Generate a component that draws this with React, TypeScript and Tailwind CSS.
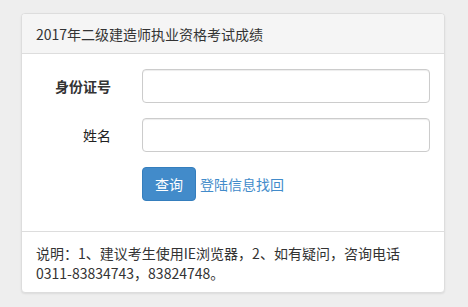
export default function App() {
  return (
    <div
      className="min-h-[307px] w-full bg-[#eeeeee] pt-[13px] text-[14px] text-[#333333]"
      style={{ fontFamily: '"Noto Sans CJK SC", "Noto Sans", sans-serif' }}
    >
      <div className="mx-[21px] w-[424px] overflow-hidden rounded-[4px] border border-[#dddddd] bg-white shadow-[0_1px_2px_rgba(0,0,0,0.08)]">
        {/* Header */}
        <div className="flex h-[40px] items-center border-b border-[#dddddd] bg-[#f5f5f5] pl-[14px] leading-none">
          2017年二级建造师执业资格考试成绩
        </div>

        {/* Form */}
        <div className="flex flex-col gap-[15px] pt-[15px] pb-[30px]">
          <div className="flex items-center">
            <label className="w-[89px] text-right font-bold leading-none">身份证号</label>
            <input
              className="ml-[31px] h-[34px] w-[288px] rounded-[4px] border border-[#cccccc] px-3 shadow-[inset_0_1px_1px_rgba(0,0,0,0.075)] outline-none"
              type="text"
            />
          </div>
          <div className="flex items-center">
            <label className="w-[89px] text-right leading-none text-[#222222]">姓名</label>
            <input
              className="ml-[31px] h-[34px] w-[288px] rounded-[4px] border border-[#cccccc] px-3 shadow-[inset_0_1px_1px_rgba(0,0,0,0.075)] outline-none"
              type="text"
            />
          </div>
          <div className="flex items-center pl-[120px]">
            <button className="h-[34px] w-[54px] rounded-[4px] border border-[#357ebd] bg-[#428bca] text-white leading-none">
              查询
            </button>
            <a className="ml-[4px] text-[#428bca] leading-none" href="#">
              登陆信息找回
            </a>
          </div>
        </div>

        {/* Footer note */}
        <div className="border-t border-[#dddddd] px-[14px] pt-[11px] pb-[9px] leading-[20px]">
          说明：1、建议考生使用IE浏览器，2、如有疑问，咨询电话
          <br />
          0311-83834743，83824748。
        </div>
      </div>
    </div>
  );
}
